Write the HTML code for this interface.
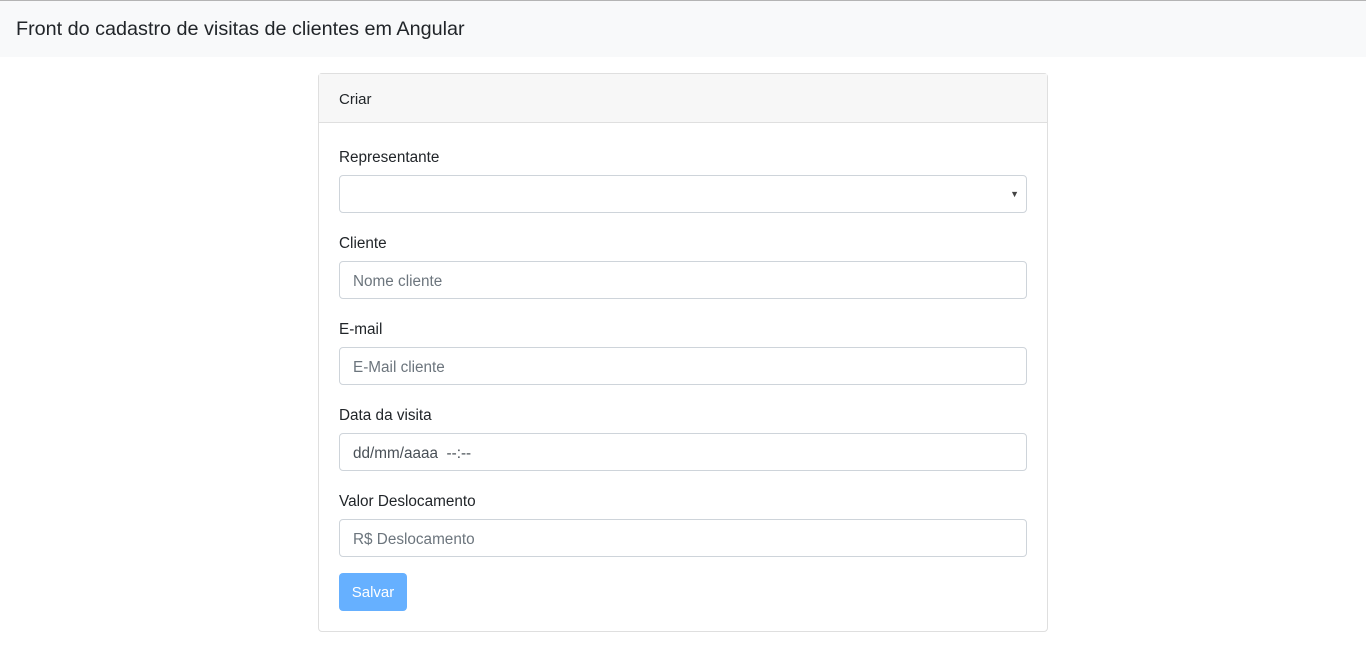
<!DOCTYPE html>
<html><head><meta charset="utf-8"><style>
*{box-sizing:border-box;margin:0;padding:0}
body{width:1366px;height:657px;background:#fff;font-family:"Liberation Sans",sans-serif;color:#212529;overflow:hidden;position:relative}
.nav{position:absolute;top:0;left:0;width:1366px;height:57px;background:#f8f9fa;border-top:1px solid #b4b4b4}
.nav span{position:absolute;left:16px;top:17px;font-size:19.8px;color:#212529}
.card{position:absolute;left:318px;top:73px;width:730px;height:559px;border:1px solid #dfdfdf;border-radius:4px}
.hd{height:49px;background:#f7f7f7;border-bottom:1px solid #dfdfdf;padding:17px 20px 0;font-size:15px}
.lbl{position:absolute;left:20px;font-size:15.3px}
.inp{position:absolute;left:20px;width:688px;height:38px;border:1px solid #ced4da;border-radius:4px;padding:11px 13px 0;font-size:15.3px;color:#6c757d}
.btn{position:absolute;left:20px;top:499px;width:68px;height:38px;background:#66b0ff;border-radius:4px;color:#fff;font-size:15px;text-align:center;padding-top:11px}
</style></head><body>
<div class="nav"><span>Front do cadastro de visitas de clientes em Angular</span></div>
<div class="card">
<div class="hd">Criar</div>
<div class="lbl" style="top:75px">Representante</div>
<div class="inp" style="top:101px"><span style="position:absolute;right:7px;top:13px;font-size:9px;color:#444">▼</span></div>
<div class="lbl" style="top:161px">Cliente</div>
<div class="inp" style="top:187px">Nome cliente</div>
<div class="lbl" style="top:247px">E-mail</div>
<div class="inp" style="top:273px">E-Mail cliente</div>
<div class="lbl" style="top:333px">Data da visita</div>
<div class="inp" style="top:359px;color:#495057">dd/mm/aaaa &nbsp;--:--</div>
<div class="lbl" style="top:419px">Valor Deslocamento</div>
<div class="inp" style="top:445px">R$ Deslocamento</div>
<div class="btn">Salvar</div>
</div>
</body></html>
